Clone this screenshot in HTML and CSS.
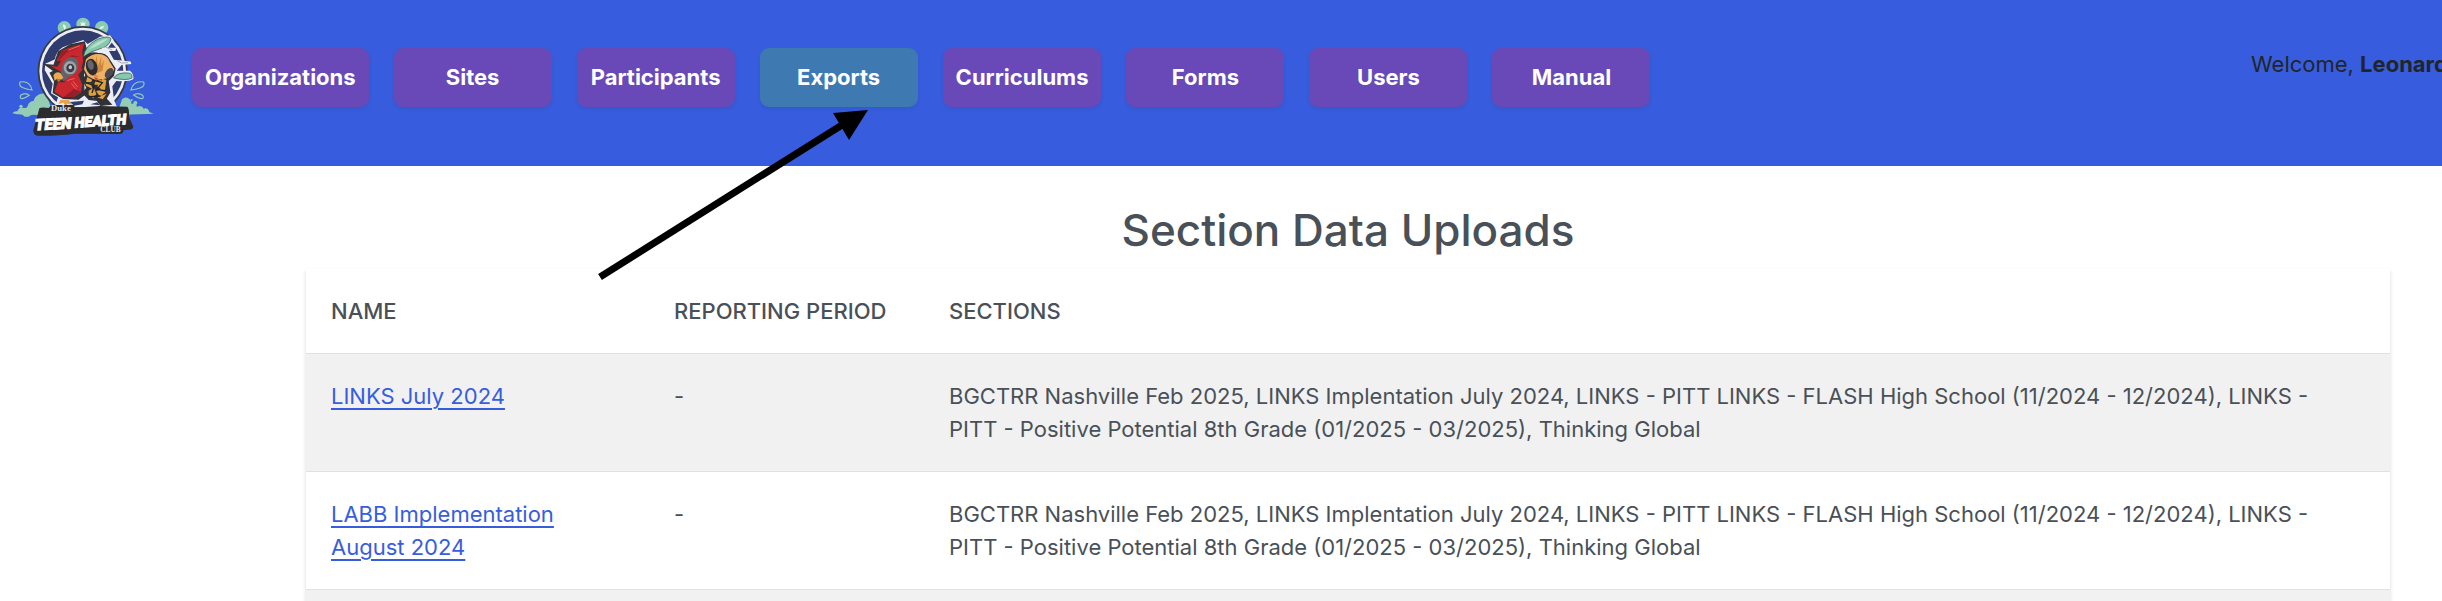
FILE: index.html
```html
<!DOCTYPE html>
<html lang="en">
<head>
<meta charset="utf-8">
<title>Section Data Uploads</title>
<link rel="stylesheet" href="styles.css">
</head>
<body>
<header class="topbar">
  <a class="brand" href="#" aria-label="Duke Teen Health Club">
    <svg class="logo" viewBox="0 0 540 498" aria-hidden="true">
      <!-- splashes -->
      <g fill="#94cdb4">
        <path d="M37 340Q42 333 52 334Q58 318 72 324Q82 326 83 317Q88 303 101 303Q104 288 120 282Q136 276 142 290L160 345H112Q94 343 90 347Q84 352 74 350Q68 341 52 343Z"/>
        <path d="M350 345L366 298Q376 288 387 296Q396 302 394 312Q407 307 411 320Q425 314 431 326Q444 322 448 336L461 341L440 342Z"/>
        <circle cx="63" cy="319" r="5"/><circle cx="406" cy="309" r="6"/><circle cx="395" cy="300" r="3"/>
      </g>
      <g fill="none" stroke="#94cdb4" stroke-width="3.5">
        <path d="M96 270Q90 241 60 246Q55 259 71 264Q82 268 96 270Z"/>
        <path d="M88 286Q76 276 62 286Q58 295 67 296Q77 294 88 286Z"/>
        <path d="M393 270Q400 241 431 246Q436 259 420 264Q408 268 393 270Z"/>
        <path d="M401 285Q414 276 428 286Q433 295 424 296Q413 294 401 285Z"/>
      </g>
      <!-- badges -->
      <g fill="#8ccbb0">
        <circle cx="193" cy="83" r="20"/><circle cx="249" cy="73" r="20"/><circle cx="305" cy="83" r="20"/>
      </g>
      <g fill="#eaf6ef">
        <path d="M189 73Q199 75 197 84L195 93L191 83Q187 79 189 73Z"/>
        <path d="M249 62L251 70L258 66L254 73L258 80L251 76L249 85L247 76L240 80L244 73L240 66L247 70Z"/>
        <path d="M297 89Q299 79 312 78Q311 86 303 87Z"/>
      </g>
      <!-- ring -->
      <circle cx="248" cy="213" r="135" fill="#343b43"/>
      <circle cx="248" cy="213" r="130" fill="#eceef6"/>
      <circle cx="248" cy="213" r="122" fill="#303b6e"/>
      <!-- light contour behind the characters -->
      <path fill="#eceef6" d="M136 191L165 178Q168 155 188 142L220 130L250 120L263 132L300 110L330 106L341 120L324 143L350 143L346 153L327 153L342 180L392 185L394 192L365 195L350 212L390 212Q402 222 400 237Q389 246 349 243L337 259L342 300L351 321H165L174 292L153 280L158 251L134 210Z"/>
      <!-- cardinal -->
      <path fill="#343438" stroke="#343438" stroke-width="4" d="M136 194L162 196L176 155L211 135L253 126L263 165L250 222L252 285L235 297L190 295L160 278L164 244L151 219L162 213Z"/>
      <path fill="#c9262d" d="M151 197L172 200L184 182L170 183L185 153L204 145L252 130L247 153L251 205L235 224L247 255L243 277L223 290L187 291L163 275L174 247L195 247L186 223L180 214Z"/>
      <path fill="#962029" d="M184 153L238 142L201 157L175 183ZM187 196L215 166L240 171L215 171ZM191 291L222 267L242 275L221 291Z"/>
      <path fill="#626369" d="M185 214Q184 178 212 171Q239 170 234 205Q230 224 209 229L190 244L181 229Z"/>
      <ellipse cx="210" cy="203" rx="19" ry="20" fill="#a1a2a6"/>
      <ellipse cx="211" cy="204" rx="12" ry="13" fill="#3a3b40"/>
      <ellipse cx="211" cy="202" rx="5" ry="6" fill="#cacace"/>
      <path fill="#eba952" d="M160 226Q169 211 182 220L190 233L183 239L171 236L164 242Z"/>
      <path fill="#ba7535" d="M169 237L186 237L175 247Z"/>
      <path fill="none" stroke="#ef6569" stroke-width="3" d="M202 242Q213 237 223 236M205 151L239 137M219 244L233 261M214 250L229 268"/>
      <path fill="#e6a24e" d="M181 299L207 300L216 314L202 311L199 320L190 308L176 312Z"/>
      <!-- bee -->
      <path fill="#323135" stroke="#323135" stroke-width="4" d="M255 170Q270 155 294 160Q318 160 327 178L345 206L340 227L324 242L329 277L318 296L333 313L302 316L292 301L267 298L249 279L261 264L249 240L258 226L247 203Z"/>
      <path fill="#efb264" d="M258 178Q278 158 304 163Q324 168 330 187L343 207L334 225L320 235L307 238L285 240L263 228L252 208Z"/>
      <path fill="#cf873c" d="M277 165L285 190L290 167L294 199L304 168L303 198L312 178L308 212L285 222L298 232L269 226L284 211Z"/>
      <ellipse cx="275" cy="201" rx="17" ry="25" fill="#2d2c30" transform="rotate(-15 275 201)"/>
      <ellipse cx="272" cy="195" rx="9" ry="15" fill="#67676b" transform="rotate(-15 272 195)"/>
      <ellipse cx="327" cy="219" rx="10" ry="17" fill="#4a4a50" transform="rotate(36 327 219)"/>
      <path fill="#e0a13d" d="M262 231L277 240L273 246L258 246ZM286 244L303 240L306 254L283 254ZM308 236L319 240L315 269L305 271L318 275L300 290L289 274L303 267L292 259ZM256 250L273 251L277 266L259 258ZM266 272L281 263L289 282L280 294L266 285ZM292 292L320 281L308 298Z"/>
      <path stroke="#222226" stroke-width="4" fill="none" d="M257 248L283 257L276 279M279 240L307 248L291 268L318 273M268 290L302 288"/>
      <path fill="#ce4735" d="M282 231L294 234L288 243Z"/>
      <!-- wings -->
      <path fill="#86caae" stroke="#2e4148" stroke-width="2" d="M250 171Q254 138 292 118Q325 105 333 116Q330 138 301 146Q272 153 250 171Z"/>
      <path fill="#b9e2cd" d="M266 148Q293 121 325 115Q306 134 266 148Z"/>
      <path fill="#86caae" stroke="#2e4148" stroke-width="2" d="M341 234Q352 216 385 219Q398 220 396 234Q380 243 341 234Z"/>
      <path fill="none" stroke="#eceef6" stroke-width="5" d="M306 145L344 148M340 182L392 188"/>
      <path fill="none" stroke="#a6a7ba" stroke-width="3" d="M316 141L337 150M351 181L364 189L384 188"/>
      <path fill="#303b6e" d="M210 306L252 302L247 313L222 317ZM271 313L292 307L300 316Z"/>
      <!-- wordmark -->
      <path fill="#2c2c2f" d="M118 325Q124 321 146 324L154 315L222 315L224 323L300 318L382 320Q388 324 387 350L400 380Q399 390 385 389L371 391L368 399Q364 403 350 402L225 401Q160 409 112 407Q99 405 100 391L110 355Z"/>
      <text class="mark-serif" x="153" y="333">Duke</text>
      <text class="mark-teen" x="106" y="391" transform="rotate(-3 106 391)">TEEN</text>
      <text class="mark-health" x="225" y="383" transform="rotate(-4 225 383)">HEALTH</text>
      <text class="mark-serif mark-club" x="301" y="397">CLUB</text>
    </svg>
  </a>
  <nav class="nav" aria-label="Main">
    <a class="nav-link" href="#">Organizations</a>
    <a class="nav-link" href="#">Sites</a>
    <a class="nav-link" href="#">Participants</a>
    <a class="nav-link nav-link-active" href="#" aria-current="page">Exports</a>
    <a class="nav-link" href="#">Curriculums</a>
    <a class="nav-link" href="#">Forms</a>
    <a class="nav-link" href="#">Users</a>
    <a class="nav-link" href="#">Manual</a>
  </nav>
  <p class="welcome">Welcome, <strong>Leonard</strong></p>
</header>
<main class="content">
  <h1 class="title">Section Data Uploads</h1>
  <table class="uploads">
    <colgroup><col class="col-name"><col class="col-period"><col></colgroup>
    <thead>
      <tr><th scope="col">NAME</th><th scope="col">REPORTING PERIOD</th><th scope="col">SECTIONS</th></tr>
    </thead>
    <tbody>
      <tr>
        <td><a class="link" href="#">LINKS July 2024</a></td>
        <td>-</td>
        <td>BGCTRR Nashville Feb 2025, LINKS Implentation July 2024, LINKS - PITT LINKS - FLASH High School (11/2024 - 12/2024), LINKS - PITT - Positive Potential 8th Grade (01/2025 - 03/2025), Thinking Global</td>
      </tr>
      <tr>
        <td><a class="link" href="#">LABB Implementation August 2024</a></td>
        <td>-</td>
        <td>BGCTRR Nashville Feb 2025, LINKS Implentation July 2024, LINKS - PITT LINKS - FLASH High School (11/2024 - 12/2024), LINKS - PITT - Positive Potential 8th Grade (01/2025 - 03/2025), Thinking Global</td>
      </tr>
      <tr><td></td><td></td><td></td></tr>
    </tbody>
  </table>
</main>
<svg class="arrow" viewBox="0 0 280 180" aria-hidden="true">
  <path d="M10 177L252 25" stroke="#000" stroke-width="7"/>
  <path d="M278 10L243 13L259 40Z"/>
</svg>
</body>
</html>
```
FILE: styles.css
```css
* {
  box-sizing: border-box;
}

body {
  position: relative;
  margin: 0;
  height: 100vh;
  overflow: hidden;
  background: #fff;
  color: #495057;
  font: 400 22px/33px Inter, "Liberation Sans", sans-serif;
}

.topbar {
  display: flex;
  align-items: flex-start;
  background: #375dde;
}

.brand {
  flex: none;
  width: 180px;
}

.logo {
  display: block;
  width: 100%;
}

.mark-serif {
  fill: #e8e8ea;
  font: 700 26px "Liberation Serif", serif;
}

.mark-club {
  font-size: 22px;
}

.mark-teen,
.mark-health {
  fill: #fff;
  stroke: #fff;
  stroke-width: 3px;
  font: italic 900 46px Roboto, sans-serif;
}

.mark-health {
  font-size: 43px;
}

.nav {
  display: flex;
  flex: 1;
  gap: 25px;
  padding: 48px 12px 0;
}

.nav-link {
  min-width: 158px;
  padding: 13px;
  border-radius: 9px;
  background: #6849b7;
  box-shadow: 0 2px 4px rgba(0, 0, 0, 0.07);
  color: #fff;
  font-weight: 700;
  line-height: 33px;
  text-align: center;
  text-decoration: none;
}

.nav-link-active {
  background: #3e7ab1;
}

.welcome {
  flex: none;
  width: 191px;
  margin: 0;
  padding-top: 48px;
  color: #212529;
  white-space: nowrap;
}

.content {
  padding: 37px 52px 0 306px;
}

.title {
  margin: 0 0 12px;
  font-size: 44px;
  font-weight: 500;
  line-height: 54px;
  text-align: center;
}

.uploads {
  width: 100%;
  table-layout: fixed;
  border-collapse: separate;
  border-spacing: 0;
  box-shadow: 0 2px 4px rgba(0, 0, 0, 0.15);
}

.col-name {
  width: 343px;
}

.col-period {
  width: 275px;
}

.uploads th,
.uploads td {
  height: 85px;
  padding: 26px 25px 25px;
  border-bottom: 1px solid #dee2e6;
  text-align: left;
  vertical-align: top;
}

.uploads td {
  height: 118px;
}

.uploads td:last-child {
  padding-right: 60px;
}

.uploads th {
  font-weight: 500;
  white-space: nowrap;
}

.uploads tbody tr:nth-child(odd) {
  background: #f1f1f1;
}

.link {
  color: #375dde;
  text-decoration-thickness: 2px;
  text-underline-offset: 4px;
}

.arrow {
  position: absolute;
  top: 100px;
  left: 590px;
  width: 280px;
  height: 180px;
}
```
